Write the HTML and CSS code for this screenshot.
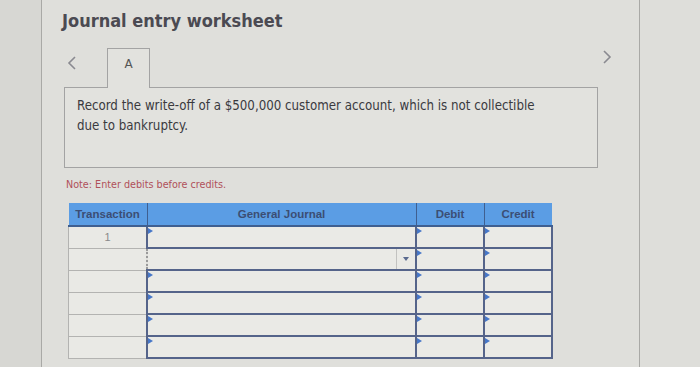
FILE: index.html
```html
<!DOCTYPE html>
<html lang="en">
<head>
  <meta charset="UTF-8" />
  <title>Journal entry worksheet</title>
  <link rel="stylesheet" href="styles.css">
</head>
<body>
  <div class="screen">
    <div class="edge"></div>

    <div class="panel">
      <h1 class="title">Journal entry worksheet</h1>

      <div class="nav">
        <div class="nav-left">
          <svg class="chev" width="12" height="16" viewBox="0 0 12 16">
            <path d="M9 2 L3 8 L9 14" fill="none" stroke="#8a8a90" stroke-width="1.6"/>
          </svg>
          <div class="tab">A</div>
        </div>
        <svg class="chev next" width="12" height="16" viewBox="0 0 12 16">
          <path d="M3 2 L9 8 L3 14" fill="none" stroke="#8a8a90" stroke-width="1.6"/>
        </svg>
      </div>

      <div class="question">
        Record the write-off of a $500,000 customer account, which is not collectible
        due to bankruptcy.
      </div>

      <p class="note">Note: Enter debits before credits.</p>

      <table class="journal">
        <thead>
          <tr>
            <th class="c-tx">Transaction</th>
            <th class="c-gj">General Journal</th>
            <th class="c-amt">Debit</th>
            <th class="c-amt">Credit</th>
          </tr>
        </thead>
        <tbody>
          <tr>
            <td class="tx">1</td>
            <td class="entry"></td>
            <td class="entry"></td>
            <td class="entry"></td>
          </tr>
          <tr>
            <td class="tx"></td>
            <td class="entry select"><span class="dd"></span></td>
            <td class="entry"></td>
            <td class="entry"></td>
          </tr>
          <tr>
            <td class="tx"></td>
            <td class="entry"></td>
            <td class="entry"></td>
            <td class="entry"></td>
          </tr>
          <tr>
            <td class="tx"></td>
            <td class="entry"></td>
            <td class="entry"></td>
            <td class="entry"></td>
          </tr>
          <tr>
            <td class="tx"></td>
            <td class="entry"></td>
            <td class="entry"></td>
            <td class="entry"></td>
          </tr>
          <tr>
            <td class="tx"></td>
            <td class="entry"></td>
            <td class="entry"></td>
            <td class="entry"></td>
          </tr>
        </tbody>
      </table>
    </div>

    <div class="edge right"></div>
  </div>
</body>
</html>
```

FILE: styles.css
```css
body {
  margin: 0;
  background: #d9d9d5;
  font-family: "DejaVu Sans", Verdana, sans-serif;
  color: #333;
  overflow: hidden;
}

.screen {
  display: flex;
  height: 367px;
}

.edge {
  width: 41px;
  background: #d7d7d3;
  border-right: 1px solid #a9a9a6;
}

.edge.right {
  flex: 1;
  background: #dededa;
  border-right: none;
  border-left: 1px solid #a9a9a6;
}

.panel {
  width: 597px;
  background: #dfdfdb;
  padding: 0 0 0 20px;
  box-sizing: border-box;
}

.title {
  margin: 10px 0 0 0;
  font-family: "DejaVu Sans Condensed", "DejaVu Sans", sans-serif;
  font-size: 18px;
  line-height: 21px;
  font-weight: bold;
  color: #4b4a52;
}

.nav {
  display: flex;
  justify-content: space-between;
  width: 552px;
  margin-top: 17px;
  margin-left: 2px;
}

.nav-left {
  display: flex;
  align-items: flex-start;
}

.chev {
  margin: 7px 0 0 2px;
}

.chev.next {
  margin: 1px 3px 0 0;
}

.tab {
  width: 43px;
  height: 40px;
  margin-left: 29px;
  box-sizing: border-box;
  border: 1px solid #a3a3a3;
  border-bottom: none;
  background: #e2e2de;
  text-align: center;
  font-size: 12px;
  line-height: 30px;
  color: #555;
  position: relative;
  z-index: 1;
  margin-bottom: -1px;
}

.question {
  margin-left: 2px;
  width: 534px;
  height: 81px;
  box-sizing: border-box;
  border: 1px solid #a3a3a3;
  background: #e2e2de;
  padding: 8px 60px 8px 12px;
  font-family: "DejaVu Sans Condensed", "DejaVu Sans", sans-serif;
  font-size: 13.2px;
  line-height: 20px;
  color: #3a3a3e;
}

.note {
  margin: 10px 0 0 4px;
  font-family: "DejaVu Sans Condensed", "DejaVu Sans", sans-serif;
  font-size: 10.7px;
  line-height: 13px;
  color: #b0505a;
}

.journal {
  margin: 12px 0 0 6px;
  border-collapse: collapse;
  table-layout: fixed;
  width: 481px;
}

.journal th {
  background: #5b9de4;
  height: 22px;
  padding: 0;
  font-family: "Liberation Sans", Arial, sans-serif;
  font-size: 11.5px;
  font-weight: bold;
  color: #3b4e74;
  border-left: 1px solid #3f5f90;
  border-bottom: 2px solid #3f5f90;
}

.journal th:first-child {
  border-left: none;
}

.c-tx { width: 78px; }
.c-gj { width: 268px; }
.c-amt { width: 67px; }

.journal td {
  height: 20px;
  padding: 0;
  position: relative;
}

.tx {
  background: #e9e9e5;
  border: 1px solid #b3b3b1;
  text-align: center;
  font-family: "Liberation Sans", Arial, sans-serif;
  font-size: 11px;
  color: #8a8a8a;
}

.entry {
  background: #eaeae6;
  border: 2px solid #55648a;
}

.entry::before {
  content: "";
  position: absolute;
  left: 0;
  top: 1px;
  border-left: 5px solid #4677c8;
  border-top: 3px solid transparent;
  border-bottom: 3px solid transparent;
}

.entry.select {
  border-top: 2px dotted #5a6a8e;
  border-bottom: 2px dotted #5a6a8e;
  border-left: 2px dotted #9a9a9a;
}

.entry.select::before {
  display: none;
}

.dd {
  position: absolute;
  right: 0;
  top: 0;
  bottom: 0;
  width: 18px;
  border-left: 1px solid #c2c2c0;
}

.dd::after {
  content: "";
  position: absolute;
  left: 6px;
  top: 8px;
  border-top: 4px solid #5a6a8e;
  border-left: 3px solid transparent;
  border-right: 3px solid transparent;
}
```
